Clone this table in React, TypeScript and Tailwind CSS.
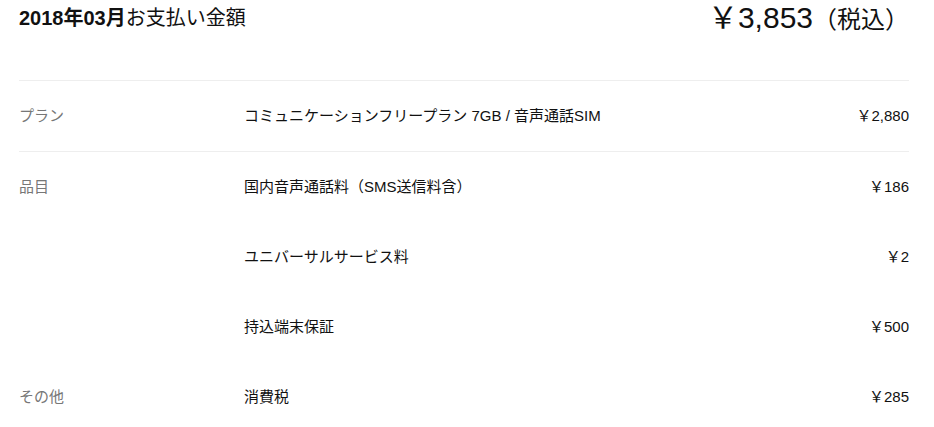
const font = { fontFamily: '"Liberation Sans", Arial, "Noto Sans CJK JP", sans-serif' };

type Row = { group?: string; name: string; price: string };

const sections: { rows: Row[] }[] = [
  { rows: [{ group: "プラン", name: "コミュニケーションフリープラン 7GB / 音声通話SIM", price: "2,880" }] },
  {
    rows: [
      { group: "品目", name: "国内音声通話料（SMS送信料含）", price: "186" },
      { name: "ユニバーサルサービス料", price: "2" },
      { name: "持込端末保証", price: "500" },
      { group: "その他", name: "消費税", price: "285" },
    ],
  },
];

export default function App() {
  return (
    <div className="min-h-[427px] bg-white pl-[19px] pr-[25px] text-[#111]" style={font}>
      {/* header */}
      <div className="flex h-[81px] items-start justify-between border-b border-[#eeeeee]">
        <h1 className="mt-[4px] text-[20px] leading-[28px] font-normal">
          <span className="font-bold">2018年03月</span>お支払い金額
        </h1>
        <div className="flex items-baseline leading-[36px]">
          <span className="text-[30px]">￥3,853</span>
          <span className="text-[24px]">（税込）</span>
        </div>
      </div>

      {sections.map((section, i) => (
        <div key={i} className={i === 0 ? "border-b border-[#eeeeee]" : ""}>
          {section.rows.map((row, j) => (
            <div key={j} className="grid h-[70px] grid-cols-[225px_1fr_auto] items-center text-[15px]">
              <span className="text-[#777777]">{row.group ?? ""}</span>
              <span>{row.name}</span>
              <span>￥{row.price}</span>
            </div>
          ))}
        </div>
      ))}
    </div>
  );
}
